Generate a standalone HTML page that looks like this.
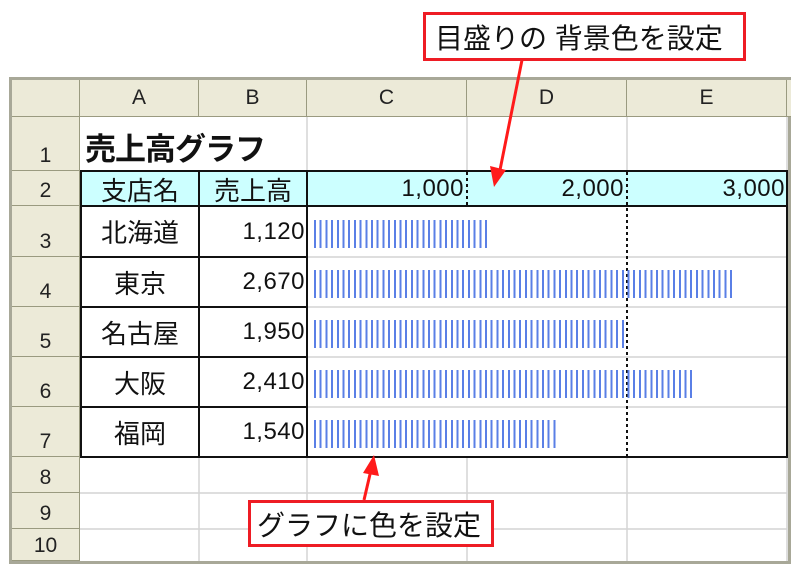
<!DOCTYPE html>
<html><head><meta charset="utf-8"><style>
body{margin:0;width:800px;height:578px;background:#fff;position:relative;overflow:hidden;font-family:"Liberation Sans","Noto Sans CJK JP",sans-serif;}
.a{position:absolute;box-sizing:border-box;}
.hd{background:#ecead8;border-right:1px solid #9a9a80;border-bottom:1px solid #9a9a80;color:#222;font-size:21px;display:flex;align-items:center;justify-content:center;}
.rh{align-items:flex-end;padding-bottom:2px;}
.t{font-size:26px;color:#111;display:flex;align-items:center;white-space:nowrap;}
.n{font-size:24px;letter-spacing:0.5px;}
.bar{background:repeating-linear-gradient(90deg,#5a7fe6 0 2px,transparent 2px 5.7px);}
</style></head><body>
<div class="a" style="left:9px;top:77px;width:782px;height:487px;background:#fff;border:3px solid #a8a898;"></div>
<svg class="a" style="left:0;top:0" width="800" height="578">
<g stroke="#d4d4d4" stroke-width="1.5">
<line x1="307" y1="117" x2="307" y2="171"/><line x1="467" y1="117" x2="467" y2="171"/><line x1="627" y1="117" x2="627" y2="171"/>
<line x1="199" y1="457" x2="199" y2="561"/><line x1="307" y1="457" x2="307" y2="561"/><line x1="467" y1="457" x2="467" y2="561"/><line x1="627" y1="457" x2="627" y2="561"/><line x1="787" y1="117" x2="787" y2="561"/>
<line x1="80" y1="493" x2="787" y2="493"/><line x1="80" y1="529" x2="787" y2="529"/>
<line x1="307" y1="257" x2="787" y2="257"/><line x1="307" y1="307" x2="787" y2="307"/><line x1="307" y1="357" x2="787" y2="357"/><line x1="307" y1="407" x2="787" y2="407"/>
</g>
<rect x="80" y="171" width="707" height="35" fill="#ccffff"/>
<g stroke="#111" stroke-width="2" stroke-dasharray="3 3">
<line x1="467" y1="172" x2="467" y2="206"/><line x1="627" y1="172" x2="627" y2="457"/>
</g>
<g stroke="#111" stroke-width="2" fill="none">
<rect x="81" y="171" width="706" height="286"/>
<line x1="81" y1="206" x2="787" y2="206"/>
<line x1="81" y1="257" x2="307" y2="257"/><line x1="81" y1="307" x2="307" y2="307"/><line x1="81" y1="357" x2="307" y2="357"/><line x1="81" y1="407" x2="307" y2="407"/>
<line x1="199" y1="171" x2="199" y2="457"/><line x1="307" y1="171" x2="307" y2="457"/>
</g>
</svg>
<div class="a hd" style="left:12px;top:80px;width:68px;height:37px;"></div>
<div class="a hd" style="left:80px;top:80px;width:119px;height:37px;">A</div>
<div class="a hd" style="left:199px;top:80px;width:108px;height:37px;">B</div>
<div class="a hd" style="left:307px;top:80px;width:160px;height:37px;">C</div>
<div class="a hd" style="left:467px;top:80px;width:160px;height:37px;">D</div>
<div class="a hd" style="left:627px;top:80px;width:160px;height:37px;">E</div>
<div class="a hd" style="left:787px;top:80px;width:4px;height:37px;border-right:none"></div>
<div class="a hd rh" style="left:12px;top:117px;width:68px;height:54px;">1</div>
<div class="a hd rh" style="left:12px;top:171px;width:68px;height:35px;">2</div>
<div class="a hd rh" style="left:12px;top:206px;width:68px;height:51px;">3</div>
<div class="a hd rh" style="left:12px;top:257px;width:68px;height:50px;">4</div>
<div class="a hd rh" style="left:12px;top:307px;width:68px;height:50px;">5</div>
<div class="a hd rh" style="left:12px;top:357px;width:68px;height:50px;">6</div>
<div class="a hd rh" style="left:12px;top:407px;width:68px;height:50px;">7</div>
<div class="a hd rh" style="left:12px;top:457px;width:68px;height:36px;">8</div>
<div class="a hd rh" style="left:12px;top:493px;width:68px;height:36px;">9</div>
<div class="a hd rh" style="left:12px;top:529px;width:68px;height:32px;">10</div>
<div class="a t" style="left:85px;top:124px;font-size:31px;font-weight:bold;letter-spacing:-1px">売上高グラフ</div>
<div class="a t" style="left:81px;top:172px;width:118px;height:34px;justify-content:center">支店名</div>
<div class="a t" style="left:199px;top:172px;width:108px;height:34px;justify-content:center">売上高</div>
<div class="a t n" style="left:307px;top:172px;width:157px;height:34px;justify-content:flex-end">1,000</div>
<div class="a t n" style="left:467px;top:172px;width:157px;height:34px;justify-content:flex-end">2,000</div>
<div class="a t n" style="left:627px;top:172px;width:158px;height:34px;justify-content:flex-end">3,000</div>
<div class="a t" style="left:81px;top:206px;width:118px;height:51px;justify-content:center">北海道</div>
<div class="a t" style="left:81px;top:257px;width:118px;height:50px;justify-content:center">東京</div>
<div class="a t" style="left:81px;top:307px;width:118px;height:50px;justify-content:center">名古屋</div>
<div class="a t" style="left:81px;top:357px;width:118px;height:50px;justify-content:center">大阪</div>
<div class="a t" style="left:81px;top:407px;width:118px;height:50px;justify-content:center">福岡</div>
<div class="a t n" style="left:199px;top:206px;width:106px;height:51px;justify-content:flex-end">1,120</div>
<div class="a t n" style="left:199px;top:257px;width:106px;height:50px;justify-content:flex-end">2,670</div>
<div class="a t n" style="left:199px;top:307px;width:106px;height:50px;justify-content:flex-end">1,950</div>
<div class="a t n" style="left:199px;top:357px;width:106px;height:50px;justify-content:flex-end">2,410</div>
<div class="a t n" style="left:199px;top:407px;width:106px;height:50px;justify-content:flex-end">1,540</div>
<div class="a bar" style="left:314px;top:220px;width:173px;height:28px;"></div>
<div class="a bar" style="left:314px;top:270px;width:422px;height:28px;"></div>
<div class="a bar" style="left:314px;top:320px;width:310px;height:28px;"></div>
<div class="a bar" style="left:314px;top:370px;width:380px;height:28px;"></div>
<div class="a bar" style="left:314px;top:420px;width:245px;height:28px;"></div>
<svg class="a" style="left:0;top:0" width="800" height="578">
<line x1="522" y1="60" x2="500" y2="170" stroke="#ff1a1a" stroke-width="3"/>
<polygon points="494,187 490,166 506,170" fill="#ff1a1a"/>
<line x1="364" y1="500" x2="371" y2="470" stroke="#ff1a1a" stroke-width="3"/>
<polygon points="374,455 363,473 379,476" fill="#ff1a1a"/>
</svg>
<div class="a t" style="left:423px;top:12px;width:323px;height:49px;border:3px solid #ee1c24;background:#fff;padding-left:9px;font-size:28px;">目盛りの 背景色を設定</div>
<div class="a t" style="left:248px;top:500px;width:246px;height:47px;border:3px solid #ee1c24;background:#fff;padding-left:6px;font-size:28px;">グラフに色を設定</div>
</body></html>
